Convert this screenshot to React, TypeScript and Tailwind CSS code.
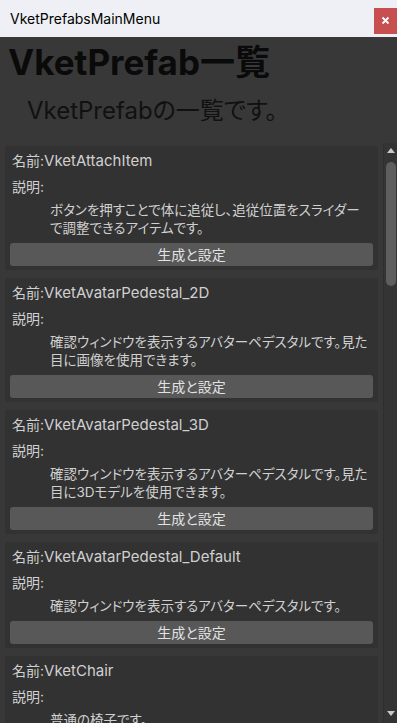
import React from "react";

type Item = { name: string; desc: string[] };

const items: Item[] = [
  { name: "VketAttachItem", desc: ["ボタンを押すことで体に追従し、追従位置をスライダー", "で調整できるアイテムです。"] },
  { name: "VketAvatarPedestal_2D", desc: ["確認ウィンドウを表示するアバターペデスタルです。見た", "目に画像を使用できます。"] },
  { name: "VketAvatarPedestal_3D", desc: ["確認ウィンドウを表示するアバターペデスタルです。見た", "目に3Dモデルを使用できます。"] },
  { name: "VketAvatarPedestal_Default", desc: ["確認ウィンドウを表示するアバターペデスタルです。"] },
  { name: "VketChair", desc: ["普通の椅子です。"] },
];

function Card({ item }: { item: Item }) {
  return (
    <div className="shrink-0 rounded-[3px] bg-[#323232] px-[5px] pt-[5px] pb-[4px] text-[#d0d0d0]">
      <div className="h-[20px] pl-[2px] text-[14px] leading-[20px] whitespace-nowrap">
        名前:<span className="text-[15px]">{item.name}</span>
      </div>
      <div className="mt-[6px] h-[20px] pl-[2px] text-[14px] leading-[20px]">説明:</div>
      <div className="mt-[4px] pl-[40px]">
        {item.desc.map((d, i) => (
          <div key={i} className="h-[18px] text-[13.5px] leading-[18px] whitespace-nowrap">
            {d}
          </div>
        ))}
      </div>
      <div className="mt-[6px] flex h-[23px] items-center justify-center rounded-[3px] bg-[#585858] text-[14px] text-[#e2e2e2]">
        生成と設定
      </div>
    </div>
  );
}

export default function App() {
  return (
    <div className="flex h-[723px] w-[397px] flex-col overflow-hidden bg-[#383838] font-['Inter','Noto_Sans_CJK_JP',sans-serif] [font-feature-settings:'palt']">
      <div className="flex h-[37px] shrink-0 items-center justify-between bg-[#eff0f5]">
        <span className="pl-[10px] text-[14px] text-black">VketPrefabsMainMenu</span>
        <div className="mb-[-4px] flex h-[26px] w-[23px] items-center justify-center self-center bg-[#c74f4f]">
          <svg width="9" height="9" viewBox="0 0 9 9">
            <path d="M1.5 1.5 L7.5 7.5 M7.5 1.5 L1.5 7.5" stroke="white" strokeWidth="1.8" />
          </svg>
        </div>
      </div>
      <div className="shrink-0 pl-[8px] pt-[3px] text-[35px] font-bold leading-[44px] text-[#0a0a0a]">VketPrefab一覧</div>
      <div className="shrink-0 pl-[27px] pt-[12px] text-[24px] leading-[30px] text-[#111111]">VketPrefabの一覧です。</div>
      <div className="mt-[17px] flex min-h-0 flex-1">
        <div className="flex min-w-0 flex-1 flex-col gap-[8px] overflow-hidden pl-[5px] pr-[5px] pt-[3px]">
          {items.map((it) => (
            <Card key={it.name} item={it} />
          ))}
        </div>
        <div className="relative flex w-[14px] shrink-0 flex-col items-center border-l border-[#2e2e2e] bg-[#343434]">
          <svg className="mt-[5px]" width="8" height="5" viewBox="0 0 8 5">
            <path d="M0 5 L4 0 L8 5 Z" fill="#c8c8c8" />
          </svg>
          <div className="mt-[9px] h-[124px] w-[10px] rounded-full bg-[#5e5e5e]" />
          <div className="flex-1" />
          <svg className="mb-[7px]" width="8" height="5" viewBox="0 0 8 5">
            <path d="M0 0 L8 0 L4 5 Z" fill="#c8c8c8" />
          </svg>
        </div>
      </div>
    </div>
  );
}
